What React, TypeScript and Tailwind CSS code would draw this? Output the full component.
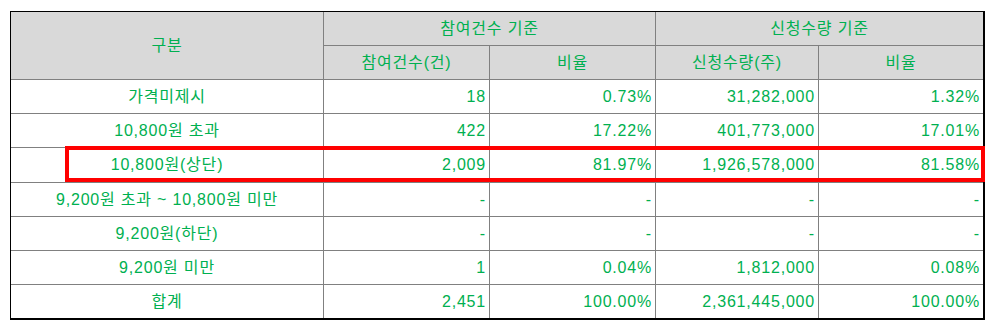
import React from 'react';

type Row = {
  label: string;
  count: string;
  countRate: string;
  qty: string;
  qtyRate: string;
};

const rows: Row[] = [
  { label: '가격미제시', count: '18', countRate: '0.73%', qty: '31,282,000', qtyRate: '1.32%' },
  { label: '10,800원 초과', count: '422', countRate: '17.22%', qty: '401,773,000', qtyRate: '17.01%' },
  { label: '10,800원(상단)', count: '2,009', countRate: '81.97%', qty: '1,926,578,000', qtyRate: '81.58%' },
  { label: '9,200원 초과 ~ 10,800원 미만', count: '-', countRate: '-', qty: '-', qtyRate: '-' },
  { label: '9,200원(하단)', count: '-', countRate: '-', qty: '-', qtyRate: '-' },
  { label: '9,200원 미만', count: '1', countRate: '0.04%', qty: '1,812,000', qtyRate: '0.08%' },
  { label: '합계', count: '2,451', countRate: '100.00%', qty: '2,361,445,000', qtyRate: '100.00%' },
];

const head = 'flex items-center justify-center bg-[#d9d9d9] border-[#808080]';
const num = 'flex items-center justify-end pr-[3px] border-[#808080]';

export default function App() {
  return (
    <div
      className="bg-white w-[991px] h-[326px] pl-[10px] pt-[11px] text-[#00b050] text-[16px] leading-none tracking-[0.8px]"
      style={{ fontFamily: '"Liberation Sans", "Noto Sans CJK KR", sans-serif' }}
    >
      <div className="relative w-[975px] border-l border-t border-r-2 border-b-2 border-black">
        <div className="grid grid-cols-[313px_166px_166px_163px_164px] grid-rows-[34px_34px_34px_34px_35px_34px_34px_34px_33px]">
          <div className={`${head} row-span-2 border-r border-b`}>구분</div>
          <div className={`${head} col-span-2 border-r border-b`}>참여건수 기준</div>
          <div className={`${head} col-span-2 border-b`}>신청수량 기준</div>
          <div className={`${head} border-r border-b`}>참여건수(건)</div>
          <div className={`${head} border-r border-b`}>비율</div>
          <div className={`${head} border-r border-b`}>신청수량(주)</div>
          <div className={`${head} border-b`}>비율</div>

          {rows.map((r, i) => {
            const last = i === rows.length - 1;
            const b = last ? '' : 'border-b';
            return (
              <React.Fragment key={r.label}>
                <div className={`flex items-center justify-center border-[#808080] border-r ${b}`}>{r.label}</div>
                <div className={`${num} border-r ${b}`}>{r.count}</div>
                <div className={`${num} border-r ${b}`}>{r.countRate}</div>
                <div className={`${num} border-r ${b}`}>{r.qty}</div>
                <div className={`${num} ${b}`}>{r.qtyRate}</div>
              </React.Fragment>
            );
          })}
        </div>

        {/* highlight box over the 상단 row */}
        <div className="absolute left-[54px] top-[134px] w-[920px] h-[36px] border-4 border-[#ff0000] pointer-events-none" />
      </div>
    </div>
  );
}
